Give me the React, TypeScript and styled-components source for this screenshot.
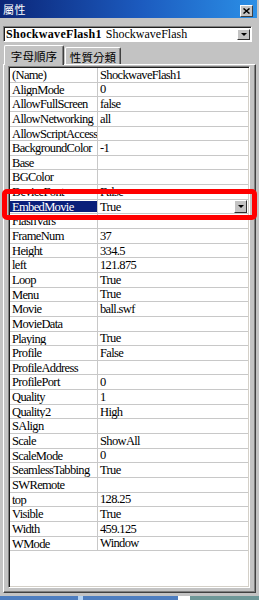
import React from "react";
import styled, { createGlobalStyle } from "styled-components";

const Global = createGlobalStyle`
  html, body { margin: 0; padding: 0; background: #c0c0c0; }
  body { width: 259px; height: 600px; overflow: hidden; }
`;

const Window = styled.div`
  position: relative;
  width: 259px;
  height: 600px;
  background: #c3c3c3;
  display: flex;
  flex-direction: column;
  font-family: "Liberation Serif", "Noto Sans CJK TC", serif;
`;

const TitleBar = styled.div`
  height: 18px;
  margin-right: 2px;
  background: linear-gradient(90deg, #0b2577 0%, #1c5bbf 55%, #2b8fe6 100%);
  display: flex;
  align-items: center;
  justify-content: space-between;
  padding: 0 4px 0 3px;
`;

const Title = styled.span`
  color: #ffffff;
  font-family: "Noto Sans CJK TC", sans-serif;
  font-size: 11px;
  letter-spacing: 0.5px;
  line-height: 18px;
`;

const CloseBtn = styled.div`
  width: 11px;
  height: 10px;
  margin-top: 3px;
  background: #c3c3c3;
  border-top: 1px solid #ffffff;
  border-left: 1px solid #ffffff;
  border-right: 1px solid #404040;
  border-bottom: 1px solid #404040;
  display: flex;
  align-items: center;
  justify-content: center;
`;

const Combo = styled.div`
  margin: 8px 7px 0 3px;
  height: 16px;
  box-sizing: border-box;
  background: #ffffff;
  border-top: 1px solid #808080;
  border-left: 1px solid #808080;
  border-right: 1px solid #ffffff;
  border-bottom: 1px solid #ffffff;
  box-shadow: inset 1px 1px 0 #202020;
  display: flex;
  align-items: center;
  padding-left: 2px;
  font-size: 12px;
  color: #000;
`;

const ComboBold = styled.span`
  font-weight: bold;
  letter-spacing: 0.3px;
  margin-right: 4px;
`;

const ComboText = styled.span`
  flex: 1;
`;

const DropBtn = styled.div<{ $h: number }>`
  width: 13px;
  height: ${(p) => p.$h}px;
  box-sizing: border-box;
  background: #c3c3c3;
  border-top: 1px solid #ffffff;
  border-left: 1px solid #ffffff;
  border-right: 1px solid #303030;
  border-bottom: 1px solid #303030;
  display: flex;
  align-items: center;
  justify-content: center;
  margin-right: 1px;
  flex: none;
`;

const Arrow = styled.div`
  width: 0;
  height: 0;
  border-left: 3px solid transparent;
  border-right: 3px solid transparent;
  border-top: 3px solid #000;
`;

const TabRow = styled.div`
  height: 19px;
  margin: 3px 3px 0 3px;
  padding-left: 1px;
  display: flex;
  align-items: flex-end;
  position: relative;
  z-index: 1;
`;

const Tab = styled.div<{ $active?: boolean }>`
  box-sizing: border-box;
  width: ${(p) => (p.$active ? 60 : 56)}px;
  height: ${(p) => (p.$active ? 20 : 17)}px;
  margin-bottom: ${(p) => (p.$active ? -1 : 0)}px;
  margin-left: ${(p) => (p.$active ? 0 : 1)}px;
  background: #c3c3c3;
  border-top: 1px solid #ffffff;
  border-left: 1px solid #ffffff;
  border-right: 1px solid #404040;
  box-shadow: inset -1px 0 0 #808080;
  border-radius: 2px 2px 0 0;
  display: flex;
  align-items: center;
  justify-content: center;
  font-family: "Noto Sans CJK TC", sans-serif;
  font-size: 11.5px;
  letter-spacing: 0.1px;
  color: #000;
  padding-top: ${(p) => (p.$active ? 0 : 1)}px;
`;

const Panel = styled.div`
  height: 529px;
  box-sizing: border-box;
  margin: 0 3px 0 3px;
  border-top: 1px solid #ffffff;
  border-left: 1px solid #ffffff;
  border-right: 1px solid #404040;
  border-bottom: 1px solid #404040;
  box-shadow: inset -1px -1px 0 #808080;
  padding: 1px 5px 4px 4px;
`;

const List = styled.div`
  height: 522px;
  box-sizing: border-box;
  background: #ffffff;
  border-top: 1px solid #808080;
  border-left: 1px solid #808080;
  border-right: 1px solid #ffffff;
  border-bottom: 1px solid #ffffff;
  box-shadow: inset 1px 1px 0 #202020, inset -1px -1px 0 #d4d0c8;
  padding: 1px 1px 0 1px;
  display: grid;
  grid-template-columns: 88px 1fr;
  grid-auto-rows: 14.65px;
  align-content: start;
  font-size: 12.5px;
  letter-spacing: -0.65px;
  color: #000;
`;

const NameCell = styled.div<{ $sel?: boolean }>`
  box-sizing: border-box;
  border-bottom: 1px solid #c8c8c8;
  border-right: 1px solid #c8c8c8;
  padding-left: 2px;
  line-height: 14px;
  white-space: nowrap;
  overflow: hidden;
  background: ${(p) => (p.$sel ? "#0a1f7a" : "transparent")};
  color: ${(p) => (p.$sel ? "#ffffff" : "#000")};
  box-shadow: ${(p) => (p.$sel ? "inset 0 1px 0 #fff, inset 0 -1px 0 #fff" : "none")};
`;

const ValueCell = styled.div`
  box-sizing: border-box;
  border-bottom: 1px solid #c8c8c8;
  padding-left: 2px;
  line-height: 14px;
  white-space: nowrap;
  display: flex;
  align-items: center;
  justify-content: space-between;
`;

const Highlight = styled.div`
  position: absolute;
  left: 2px;
  top: 189px;
  width: 255px;
  height: 31px;
  box-sizing: border-box;
  border: 5px solid #ff0000;
  border-radius: 5px;
  pointer-events: none;
`;

const Strip = styled.div`
  margin-top: 3px;
  height: 4px;
  display: flex;
`;

const StripPart = styled.div<{ $w: number; $c: string }>`
  width: ${(p) => p.$w}px;
  background: ${(p) => p.$c};
  flex: none;
`;

const rows: [string, string][] = [
  ["(Name)", "ShockwaveFlash1"],
  ["AlignMode", "0"],
  ["AllowFullScreen", "false"],
  ["AllowNetworking", "all"],
  ["AllowScriptAccess", ""],
  ["BackgroundColor", "-1"],
  ["Base", ""],
  ["BGColor", ""],
  ["DeviceFont", "False"],
  ["EmbedMovie", "True"],
  ["FlashVars", ""],
  ["FrameNum", "37"],
  ["Height", "334.5"],
  ["left", "121.875"],
  ["Loop", "True"],
  ["Menu", "True"],
  ["Movie", "ball.swf"],
  ["MovieData", ""],
  ["Playing", "True"],
  ["Profile", "False"],
  ["ProfileAddress", ""],
  ["ProfilePort", "0"],
  ["Quality", "1"],
  ["Quality2", "High"],
  ["SAlign", ""],
  ["Scale", "ShowAll"],
  ["ScaleMode", "0"],
  ["SeamlessTabbing", "True"],
  ["SWRemote", ""],
  ["top", "128.25"],
  ["Visible", "True"],
  ["Width", "459.125"],
  ["WMode", "Window"],
];

export default function App() {
  return (
    <Window>
      <Global />
      <TitleBar>
        <Title>屬性</Title>
        <CloseBtn>
          <svg width="7" height="6" viewBox="0 0 7 6">
            <path d="M0.5 0.5 L6.5 5.5 M6.5 0.5 L0.5 5.5" stroke="#000" strokeWidth="1.5" />
          </svg>
        </CloseBtn>
      </TitleBar>
      <Combo>
        <ComboBold>ShockwaveFlash1</ComboBold>
        <ComboText>ShockwaveFlash</ComboText>
        <DropBtn $h={11}>
          <Arrow />
        </DropBtn>
      </Combo>
      <TabRow>
        <Tab $active>字母順序</Tab>
        <Tab>性質分類</Tab>
      </TabRow>
      <Panel>
        <List>
          {rows.map(([n, v]) => {
            const sel = n === "EmbedMovie";
            return (
              <React.Fragment key={n}>
                <NameCell $sel={sel}>{n}</NameCell>
                <ValueCell>
                  <span>{v}</span>
                  {sel && (
                    <DropBtn $h={13}>
                      <Arrow />
                    </DropBtn>
                  )}
                </ValueCell>
              </React.Fragment>
            );
          })}
        </List>
      </Panel>
      <Strip>
        <StripPart $w={78} $c="#4d7dbf" />
        <StripPart $w={5} $c="#b4d2f2" />
        <StripPart $w={95} $c="#4d7dbf" />
        <StripPart $w={12} $c="#ffffff" />
        <StripPart $w={69} $c="#6e9797" />
      </Strip>
      <Highlight />
    </Window>
  );
}
